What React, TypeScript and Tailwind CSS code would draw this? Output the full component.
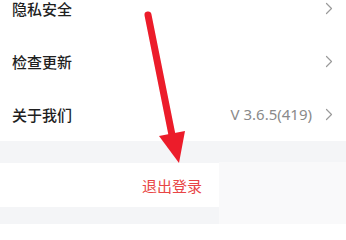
import React from "react";

function Chevron() {
  return (
    <svg width="8" height="13" viewBox="0 0 8 13" fill="none" className="shrink-0">
      <path d="M1.5 1.5 L6.5 6.5 L1.5 11.5" stroke="#9a9a9a" strokeWidth="1.2" strokeLinecap="round" strokeLinejoin="round" />
    </svg>
  );
}

function Row({ label, value }: { label: string; value?: string }) {
  return (
    <div className="h-[53px] flex items-center justify-between pl-[12px] pr-[13px] bg-white">
      <span className="text-[15px] font-medium text-[#1f1f1f] leading-none">{label}</span>
      <div className="flex items-center gap-[13px]">
        {value && (
          <span
            className="text-[15px] text-[#8a8a8a] leading-none"
            style={{ fontFamily: '"Noto Sans", "Noto Sans CJK SC", sans-serif' }}
          >
            {value}
          </span>
        )}
        <Chevron />
      </div>
    </div>
  );
}

export default function App() {
  return (
    <div
      className="relative w-[346px] h-[224px] overflow-hidden bg-[#f4f5f7]"
      style={{ fontFamily: '"Noto Sans CJK SC", "Noto Sans", sans-serif' }}
    >
      <div className="-mt-[18px]">
        <Row label="隐私安全" />
        <Row label="检查更新" />
        <Row label="关于我们" value="V 3.6.5(419)" />
      </div>
      <div className="h-[22px]" />
      <div className="h-[44px] bg-white flex items-center justify-center">
        <span className="text-[15px] text-[#e84545] leading-none ml-[-2px]">退出登录</span>
      </div>
      <div className="absolute left-[219px] top-[162px] w-[127px] h-[62px] bg-[#f9f9fa]" />
      <svg className="absolute left-0 top-0" width="346" height="224" viewBox="0 0 346 224">
        <line x1="148" y1="15" x2="173" y2="140" stroke="#ec1c2a" strokeWidth="7" strokeLinecap="round" />
        <polygon points="159,136 185,131 179,163" fill="#ec1c2a" />
      </svg>
    </div>
  );
}
